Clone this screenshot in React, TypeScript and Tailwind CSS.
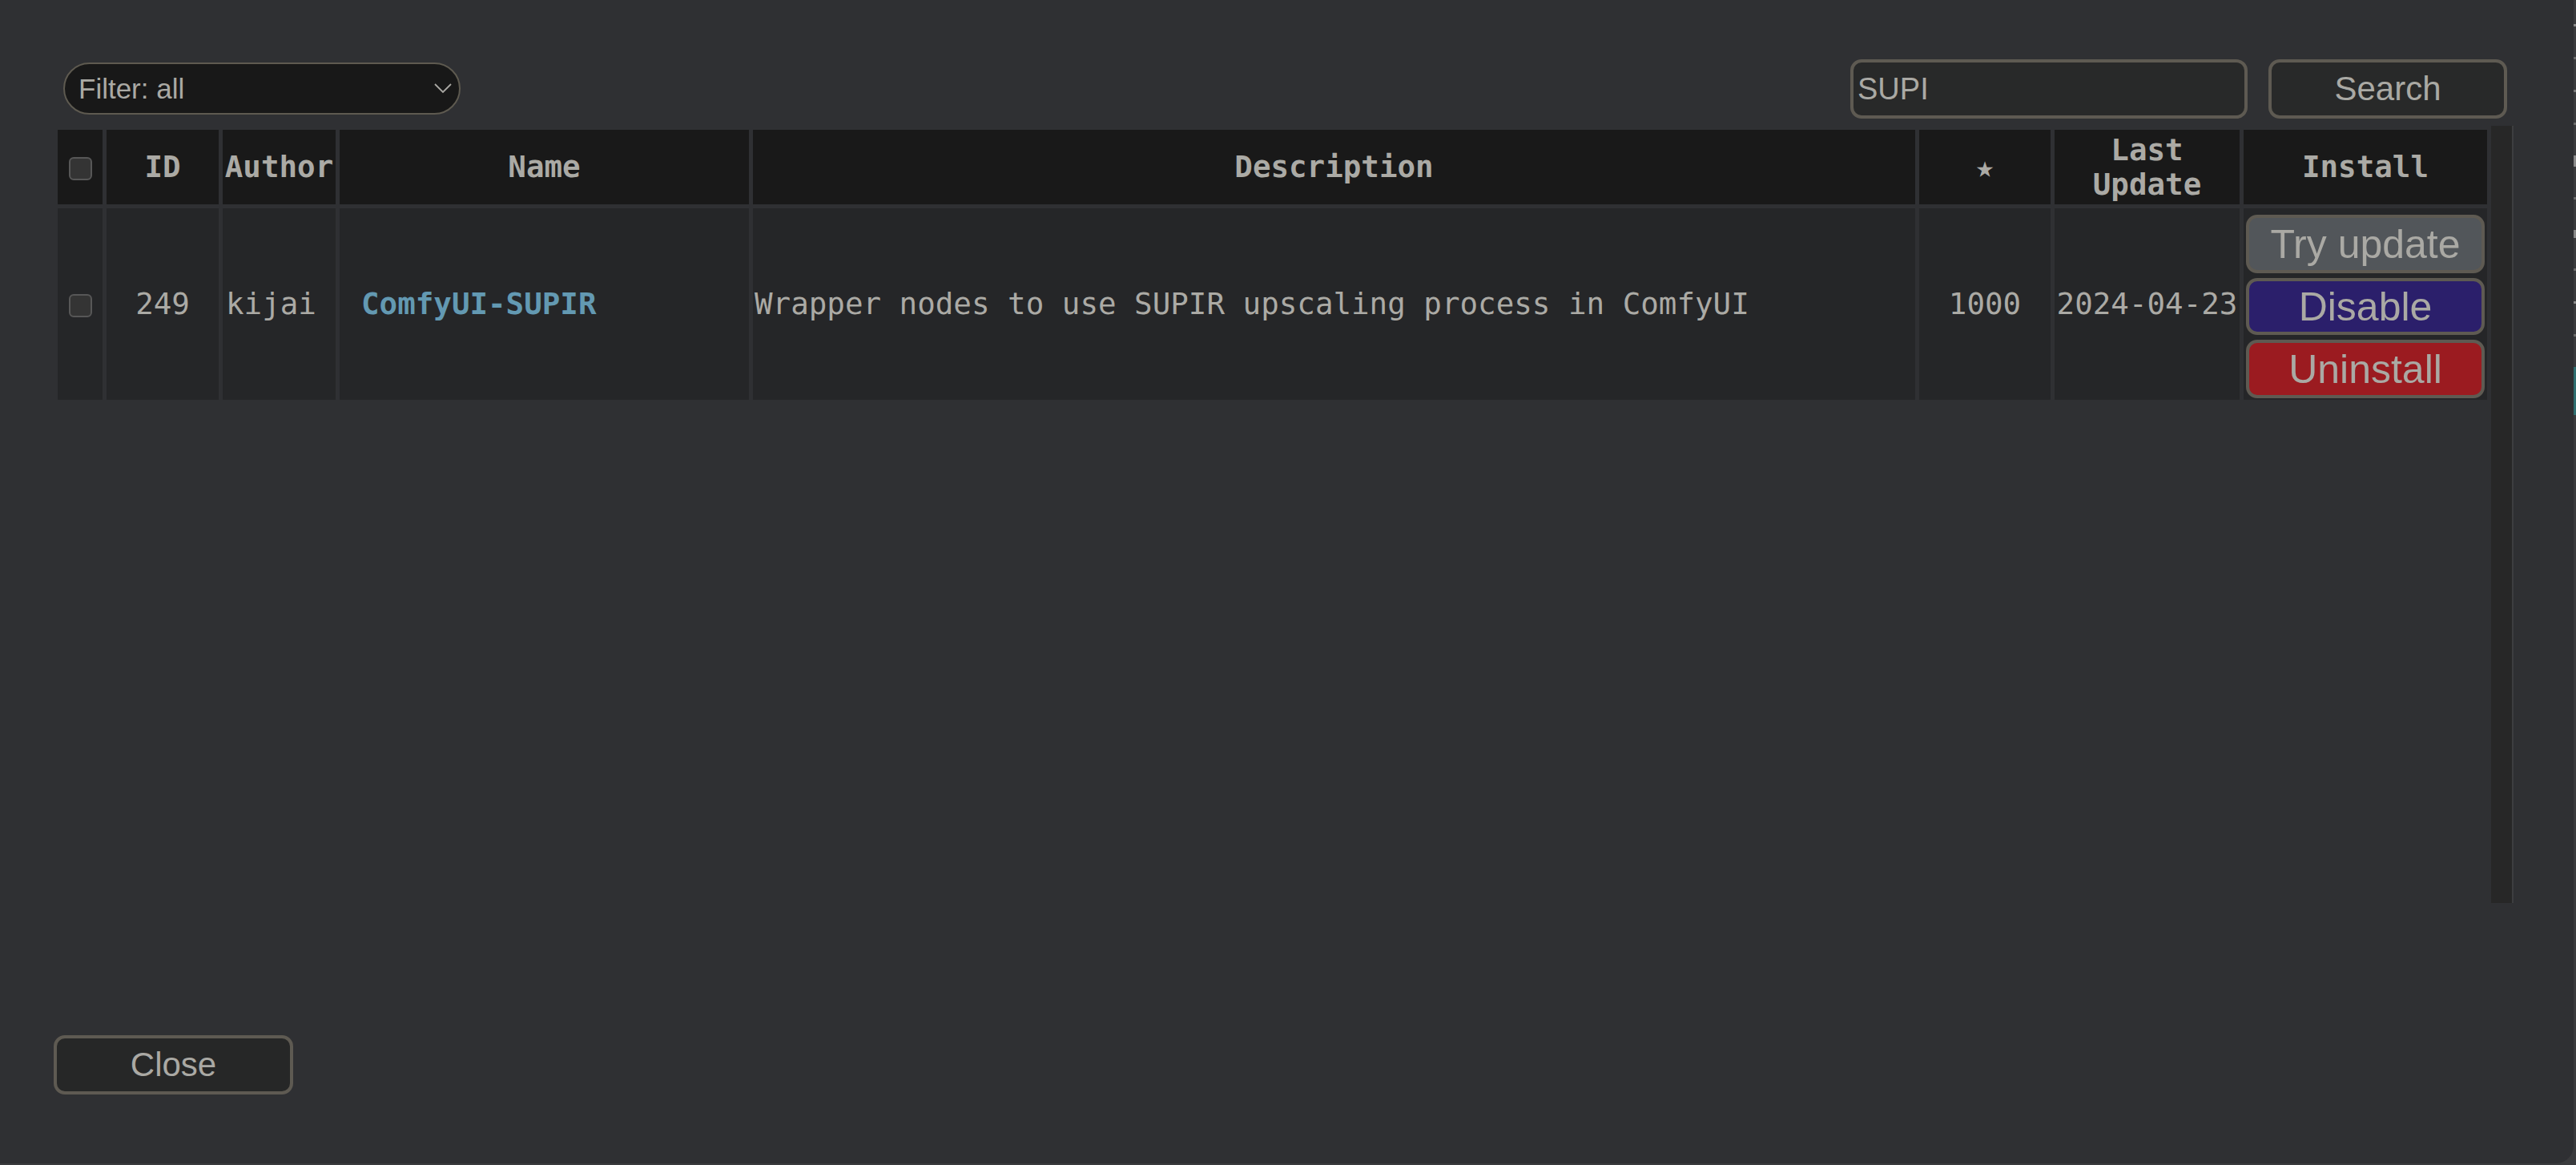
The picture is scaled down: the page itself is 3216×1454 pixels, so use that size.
import React from 'react';

const mono = { fontFamily: '"DejaVu Sans Mono", "Liberation Mono", monospace' };
const sans = { fontFamily: '"Liberation Sans", Arial, sans-serif' };

const Checkbox = () => (
  <span className="inline-block h-[29px] w-[29px] rounded-[6px] border-2 border-[#575757] bg-[#343434] align-middle" />
);

const Chevron = () => (
  <svg width="22" height="13" viewBox="0 0 22 13" fill="none">
    <polyline points="1,1 11,11 21,1" stroke="#a9a8a3" strokeWidth="1.8" />
  </svg>
);

const InstallButton = ({ label, bg, className }: { label: string; bg: string; className: string }) => (
  <div
    className={`flex w-full items-center justify-center rounded-[14px] border-4 border-[#5e5a52] text-[50px] leading-none text-[#aaa9a4] ${bg} ${className}`}
    style={sans}
  >
    {label}
  </div>
);

const columns = [
  { label: '', w: 'w-[56px]' },
  { label: 'ID', w: 'w-[140px]' },
  { label: 'Author', w: 'w-[141px]' },
  { label: 'Name', w: 'w-[511px]' },
  { label: 'Description', w: 'w-[1451px]' },
  { label: '★', w: 'w-[164px]' },
  { label: 'Last Update', w: 'w-[231px]' },
  { label: 'Install', w: 'w-[304px]' },
];

export default function App() {
  return (
    <div className="flex h-[1454px] w-full overflow-hidden bg-[#3a3b3d]">
      <div className="flex h-[1452px] w-[3213px] flex-col rounded-br-[22px] bg-[#2f3033] pl-[67px] pt-[73px]">
        {/* top bar */}
        <div className="flex h-[75px] w-[3063px] items-center">
          <div className="ml-[12px] flex h-[65px] w-[496px] items-center justify-between rounded-full border-2 border-[#5e5a50] bg-[#181818] pl-[17px] pr-[9px]">
            <span className="text-[35px] leading-none text-[#aaa9a4]" style={sans}>
              Filter: all
            </span>
            <Chevron />
          </div>
          <div className="ml-auto flex h-[74px] w-[496px] items-center rounded-[14px] border-4 border-[#5e5a52] bg-[#282929] pl-[5px]">
            <span className="text-[38px] leading-none text-[#aaa9a4]" style={sans}>
              SUPI
            </span>
          </div>
          <div
            className="ml-[26px] flex h-[74px] w-[298px] items-center justify-center rounded-[14px] border-4 border-[#5e5a52] bg-[#282929] text-[42px] leading-none text-[#aaa9a4]"
            style={sans}
          >
            Search
          </div>
        </div>

        {/* table area */}
        <div className="mt-[9px] flex h-[970px] w-[3071px]">
          <div className="flex-1">
            <table className="table-fixed border-separate border-spacing-[5px] text-[37.5px] text-[#abaaa5]" style={mono}>
              <thead>
                <tr>
                  {columns.map((c, i) => (
                    <th
                      key={i}
                      className={`${c.w} h-[93px] bg-[#191919] p-0 text-center align-middle font-bold leading-[43px]`}
                    >
                      {i === 0 ? <Checkbox /> : c.label}
                    </th>
                  ))}
                </tr>
              </thead>
              <tbody>
                <tr>
                  <td className="h-[239px] bg-[#252628] p-0 text-center align-middle">
                    <Checkbox />
                  </td>
                  <td className="bg-[#252628] p-0 text-center align-middle">249</td>
                  <td className="bg-[#252628] p-0 pl-[4px] text-left align-middle">kijai</td>
                  <td className="bg-[#252628] p-0 pl-[27px] text-left align-middle font-bold text-[#6399b2]">
                    ComfyUI-SUPIR
                  </td>
                  <td className="whitespace-nowrap bg-[#252628] p-0 pl-[2px] text-left align-middle">
                    Wrapper nodes to use SUPIR upscaling process in ComfyUI
                  </td>
                  <td className="bg-[#252628] p-0 text-center align-middle">1000</td>
                  <td className="whitespace-nowrap bg-[#252628] p-0 text-center align-middle">2024-04-23</td>
                  <td className="bg-[#252628] p-0 align-top">
                    <div className="flex flex-col px-[3px]">
                      <InstallButton label="Try update" bg="bg-[#52565a]" className="mt-[8px] h-[73px]" />
                      <InstallButton label="Disable" bg="bg-[#2b1f6b]" className="mt-[6px] h-[71px]" />
                      <InstallButton label="Uninstall" bg="bg-[#9b1b20]" className="mt-[6px] h-[73px]" />
                    </div>
                  </td>
                </tr>
              </tbody>
            </table>
          </div>
          {/* scrollbar track */}
          <div className="w-[28px] border-r-2 border-[#3d3e40] bg-[#272727]" />
        </div>

        <div
          className="mt-[165px] flex h-[74px] w-[299px] items-center justify-center rounded-[14px] border-4 border-[#5e5a52] bg-[#262727] text-[42px] leading-none text-[#aaa9a4]"
          style={sans}
        >
          Close
        </div>
      </div>

      {/* sliver of the canvas behind the dialog */}
      <div className="flex w-[3px] flex-col gap-[38px] pt-[30px]">
        <div className="h-[3px] bg-[#8a8a8a]" />
        <div className="h-[3px] bg-[#6a6a6a]" />
        <div className="h-[3px] bg-[#777]" />
        <div className="h-[3px] bg-[#6a6a6a]" />
        <div className="h-[14px] bg-[#8a8a8a]" />
        <div className="h-[3px] bg-[#6a6a6a]" />
        <div className="h-[10px] bg-[#888]" />
        <div className="h-[3px] bg-[#6a6a6a]" />
        <div className="h-[3px] bg-[#8a8a8a]" />
        <div className="h-[3px] bg-[#6a6a6a]" />
        <div className="h-[60px] bg-[#2f6e70]" />
      </div>
    </div>
  );
}
